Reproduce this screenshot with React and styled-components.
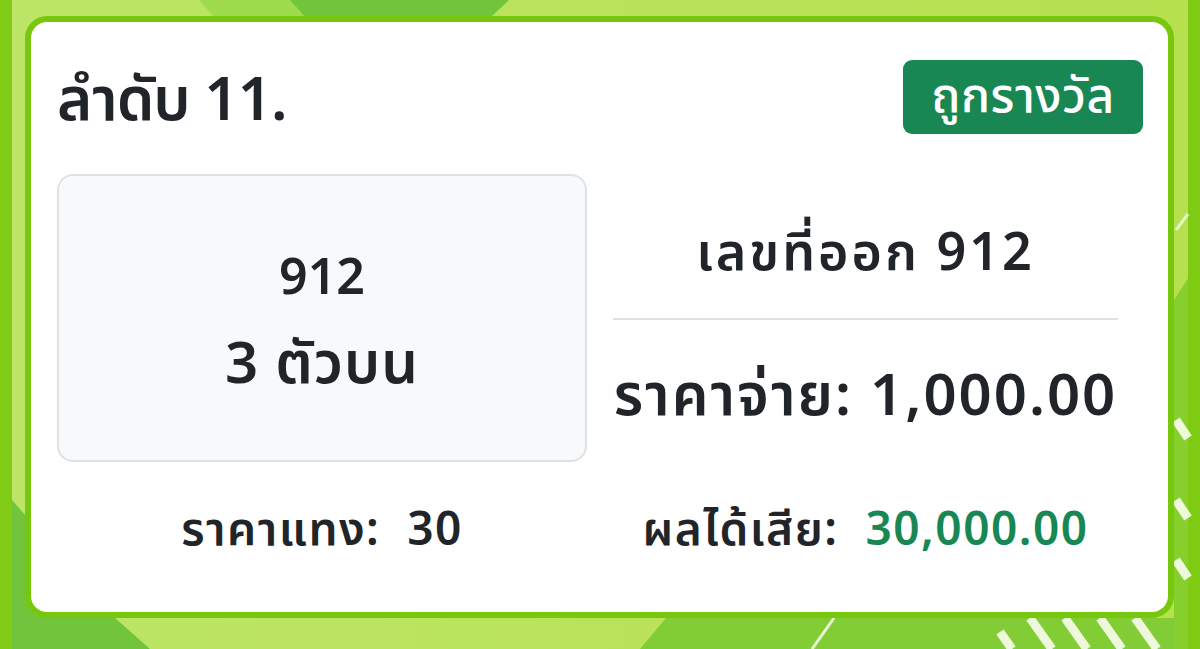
import React from "react";
import styled, { createGlobalStyle } from "styled-components";

const GlobalStyle = createGlobalStyle`
  html, body {
    margin: 0;
    padding: 0;
  }
  body {
    font-family: "Noto Sans", "Noto Sans Thai", "Open Sans", sans-serif;
    color: #212529;
    background: #b9e25b;
  }
`;

const Page = styled.div`
  position: relative;
  width: 1200px;
  height: 649px;
  overflow: hidden;
  box-sizing: border-box;
  padding: 16px 26px 31px 25px;
`;

const Backdrop = styled.svg`
  position: absolute;
  inset: 0;
  width: 100%;
  height: 100%;
  z-index: 0;
`;

const Card = styled.div`
  position: relative;
  z-index: 1;
  box-sizing: border-box;
  height: 100%;
  background: #ffffff;
  border: 6px solid #78c70f;
  border-radius: 22px;
  padding: 38px 25px 0 26px;
  display: flex;
  flex-direction: column;
`;

const Header = styled.div`
  display: flex;
  justify-content: space-between;
  align-items: center;
  height: 74px;
`;

const Title = styled.h1`
  margin: 0;
  font-size: 60px;
  font-weight: 600;
  line-height: 1;
  letter-spacing: -1px;
`;

const Badge = styled.div`
  background: #198754;
  color: #ffffff;
  border-radius: 9px;
  width: 240px;
  height: 74px;
  display: flex;
  align-items: center;
  justify-content: center;
  font-size: 48px;
  font-weight: 500;
  letter-spacing: 0.5px;
`;

const Grid = styled.div`
  display: grid;
  grid-template-columns: 530px 505px;
  column-gap: 26px;
  margin-top: 40px;
`;

const NumberBox = styled.div`
  box-sizing: border-box;
  height: 288px;
  background: #f8f9fa;
  border: 2px solid #dee2e6;
  border-radius: 16px;
  display: flex;
  flex-direction: column;
  align-items: center;
  justify-content: center;
  gap: 26px;
  padding-top: 4px;
`;

const BoxText = styled.div`
  font-size: ${p => p.size}px;
  font-weight: 600;
  line-height: 1.1;
  letter-spacing: ${p => p.spacing || 0}px;
`;

const ResultCol = styled.div`
  display: flex;
  flex-direction: column;
  align-items: stretch;
  padding-top: 45px;
`;

const ResultLine = styled.div`
  text-align: center;
  font-size: ${p => p.size}px;
  font-weight: 600;
  line-height: 1.2;
  letter-spacing: ${p => p.spacing}px;
  white-space: nowrap;
`;

const Divider = styled.hr`
  border: none;
  border-top: 2px solid #dee2e6;
  margin: 37px 0 38px;
`;

const Summary = styled.div`
  text-align: center;
  font-size: 46px;
  font-weight: 600;
  line-height: 1.2;
  letter-spacing: 1.5px;
  margin-top: 38px;
  white-space: pre;
`;

const Money = styled.span`
  color: ${p => (p.win ? "#198754" : "inherit")};
`;

const Background = () => (
  <Backdrop viewBox="0 0 1200 649" preserveAspectRatio="none">
    <defs>
      <linearGradient id="lime" x1="0" y1="0" x2="1" y2="0">
        <stop offset="0" stopColor="#bde567" />
        <stop offset="1" stopColor="#b7e04f" />
      </linearGradient>
    </defs>
    <rect x="0" y="0" width="1200" height="649" fill="url(#lime)" />
    <polygon points="199,0 290,0 306,18 215,18" fill="#9edb4d" />
    <polygon points="290,0 509,0 490,18 306,18" fill="#72c43c" />
    <polygon points="0,0 12,0 12,649 0,649" fill="#80cc16" />
    <polygon points="12,500 115,618 150,649 12,649" fill="#72c43c" />
    <polygon points="666,618 1200,618 1200,649 640,649" fill="#82cc36" />
    <polygon points="1174,300 1200,260 1200,649 1174,649" fill="#86cf2c" />
    <rect x="1188" y="0" width="12" height="649" fill="#7fcb14" />
    <line x1="834" y1="618" x2="812" y2="649" stroke="#eaf7d6" strokeWidth="3" />
    <g stroke="#eef9dc" strokeWidth="9">
      <line x1="1000" y1="632" x2="1012" y2="649" />
      <line x1="1030" y1="618" x2="1052" y2="649" />
      <line x1="1065" y1="618" x2="1087" y2="649" />
      <line x1="1100" y1="618" x2="1122" y2="649" />
      <line x1="1135" y1="618" x2="1157" y2="649" />
      <line x1="1176" y1="560" x2="1188" y2="578" />
      <line x1="1176" y1="500" x2="1188" y2="518" />
      <line x1="1176" y1="420" x2="1188" y2="438" />
    </g>
    <line x1="1176" y1="230" x2="1188" y2="214" stroke="#e4f4c9" strokeWidth="3" />
  </Backdrop>
);

export default function App() {
  return (
    <>
      <GlobalStyle />
      <Page>
        <Background />
        <Card>
          <Header>
            <Title>ลำดับ 11.</Title>
            <Badge>ถูกรางวัล</Badge>
          </Header>
          <Grid>
            <NumberBox>
              <BoxText size={50}>912</BoxText>
              <BoxText size={58} spacing={1}>3 ตัวบน</BoxText>
            </NumberBox>
            <ResultCol>
              <ResultLine size={52} spacing={3}>เลขที่ออก 912</ResultLine>
              <Divider />
              <ResultLine size={58} spacing={2}>ราคาจ่าย: 1,000.00</ResultLine>
            </ResultCol>
            <Summary>ราคาแทง:  <Money>30</Money></Summary>
            <Summary>ผลได้เสีย:  <Money win>30,000.00</Money></Summary>
          </Grid>
        </Card>
      </Page>
    </>
  );
}
